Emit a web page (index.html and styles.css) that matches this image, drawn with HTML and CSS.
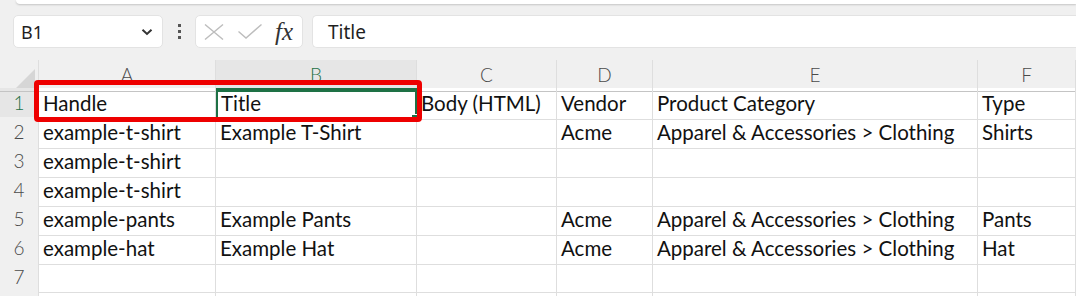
FILE: index.html
```html
<!DOCTYPE html>
<html lang="en">
<head>
  <meta charset="UTF-8">
  <title>Products - Sheet</title>
  <link rel="stylesheet" href="styles.css">
</head>
<body>
  <div class="ribbon-edge"></div>

  <div class="toolbar">
    <div class="name-box">
      <span>B1</span>
      <svg class="chevron" width="12" height="8" viewBox="0 0 12 8"><path d="M1.5 1.8 L6 6 L10.5 1.8" fill="none" stroke="#333" stroke-width="2"/></svg>
    </div>
    <div class="grip"><i></i><i></i><i></i></div>
    <div class="fx-box">
      <svg width="20" height="16" viewBox="0 0 20 16"><path d="M1 0.5 L19 15.5 M19 0.5 L1 15.5" stroke="#bdbdbd" stroke-width="1.4" fill="none"/></svg>
      <svg width="24" height="15" viewBox="0 0 24 15"><path d="M0.5 7.5 L8 14 L23.5 0.5" stroke="#bdbdbd" stroke-width="1.4" fill="none"/></svg>
      <span class="fx">fx</span>
    </div>
    <div class="formula">Title</div>
  </div>

  <div class="sheet">
    <div class="row head">
      <div class="corner"></div>
      <div class="col a">A</div>
      <div class="col b active">B</div>
      <div class="col c">C</div>
      <div class="col d">D</div>
      <div class="col e">E</div>
      <div class="col f">F</div>
    </div>
    <div class="row">
      <div class="num active">1</div>
      <div class="cell a">Handle</div>
      <div class="cell b selected">Title</div>
      <div class="cell c">Body (HTML)</div>
      <div class="cell d">Vendor</div>
      <div class="cell e">Product Category</div>
      <div class="cell f">Type</div>
    </div>
    <div class="row">
      <div class="num">2</div>
      <div class="cell a">example-t-shirt</div>
      <div class="cell b">Example T-Shirt</div>
      <div class="cell c"></div>
      <div class="cell d">Acme</div>
      <div class="cell e">Apparel &amp; Accessories &gt; Clothing</div>
      <div class="cell f">Shirts</div>
    </div>
    <div class="row">
      <div class="num">3</div>
      <div class="cell a">example-t-shirt</div>
      <div class="cell b"></div>
      <div class="cell c"></div>
      <div class="cell d"></div>
      <div class="cell e"></div>
      <div class="cell f"></div>
    </div>
    <div class="row">
      <div class="num">4</div>
      <div class="cell a">example-t-shirt</div>
      <div class="cell b"></div>
      <div class="cell c"></div>
      <div class="cell d"></div>
      <div class="cell e"></div>
      <div class="cell f"></div>
    </div>
    <div class="row">
      <div class="num">5</div>
      <div class="cell a">example-pants</div>
      <div class="cell b">Example Pants</div>
      <div class="cell c"></div>
      <div class="cell d">Acme</div>
      <div class="cell e">Apparel &amp; Accessories &gt; Clothing</div>
      <div class="cell f">Pants</div>
    </div>
    <div class="row">
      <div class="num">6</div>
      <div class="cell a">example-hat</div>
      <div class="cell b">Example Hat</div>
      <div class="cell c"></div>
      <div class="cell d">Acme</div>
      <div class="cell e">Apparel &amp; Accessories &gt; Clothing</div>
      <div class="cell f">Hat</div>
    </div>
    <div class="row">
      <div class="num">7</div>
      <div class="cell a"></div>
      <div class="cell b"></div>
      <div class="cell c"></div>
      <div class="cell d"></div>
      <div class="cell e"></div>
      <div class="cell f"></div>
    </div>
    <div class="row">
      <div class="num"></div>
      <div class="cell a"></div>
      <div class="cell b"></div>
      <div class="cell c"></div>
      <div class="cell d"></div>
      <div class="cell e"></div>
      <div class="cell f"></div>
    </div>

    <div class="highlight"></div>
  </div>
</body>
</html>
```

FILE: styles.css
```css
body {
  margin: 0;
  width: 1076px;
  height: 296px;
  overflow: hidden;
  background: #f0f0f0;
  font-family: 'Noto Sans', sans-serif;
  color: #1f1f1f;
}

.ribbon-edge {
  height: 4px;
  margin-left: 16px;
  background: #fff;
  border-bottom-left-radius: 8px;
  box-shadow: 0 1px 2px rgba(0,0,0,0.18);
}

.toolbar {
  display: flex;
  align-items: center;
  height: 33px;
  padding: 11px 0 12px 13px;
}

.name-box {
  width: 150px;
  height: 33px;
  box-sizing: border-box;
  display: flex;
  align-items: center;
  justify-content: space-between;
  padding: 0 9px 0 7px;
  background: #fff;
  border: 1px solid #e3e3e3;
  border-radius: 5px;
  font-size: 18px;
}

.grip {
  width: 32px;
  display: flex;
  flex-direction: column;
  align-items: center;
  gap: 3px;
}

.grip i {
  width: 3px;
  height: 3px;
  background: #555;
}

.fx-box {
  width: 108px;
  height: 33px;
  box-sizing: border-box;
  display: flex;
  align-items: center;
  gap: 14px;
  padding-left: 8px;
  background: #fff;
  border: 1px solid #e3e3e3;
  border-radius: 5px;
}

.fx {
  font-family: 'Liberation Serif', serif;
  font-style: italic;
  font-size: 25px;
  color: #333;
  margin-left: -1px;
  line-height: 1;
}

.formula {
  flex: 1;
  height: 33px;
  box-sizing: border-box;
  margin-left: 9px;
  padding-left: 15px;
  display: flex;
  align-items: center;
  background: #fff;
  border: 1px solid #e3e3e3;
  border-right: none;
  border-radius: 5px 0 0 5px;
  font-size: 19px;
}

.sheet {
  position: relative;
  background: #fff;
  font-family: 'Lato', sans-serif;
}

.row {
  display: grid;
  grid-template-columns: 39px 177px 201px 140px 96px 325px 98px;
  height: 29px;
}

.row > div {
  box-sizing: border-box;
  border-right: 1px solid #dedede;
  border-bottom: 1px solid #dedede;
}

.head {
  height: 28px;
  background: #f0f0f0;
}

.head > div {
  border-bottom-color: #c4c4c4;
}

.corner {
  position: relative;
}

.corner::after {
  content: "";
  position: absolute;
  right: 3px;
  bottom: 3px;
  border-style: solid;
  border-width: 0 0 19px 19px;
  border-color: transparent transparent #d6d6d6 transparent;
}

.col {
  text-align: center;
  font-size: 19px;
  line-height: 30px;
  color: #4a4a4a;
  font-weight: 300;
}

.col.active {
  color: #1e7145;
  background: #e6e6e6;
  border-bottom: 2px solid #1e7145;
}

.num {
  background: #f0f0f0;
  text-align: center;
  font-size: 19px;
  line-height: 30px;
  color: #4a4a4a;
  font-weight: 300;
}

.num.active {
  color: #1e7145;
  background: #e6e6e6;
}

.cell {
  padding-left: 4px;
  font-size: 20.5px;
  line-height: 31px;
  color: #111;
  white-space: nowrap;
}

.cell.selected {
  position: relative;
  border: 2px solid #1e7145;
  line-height: 27px;
  padding-left: 3px;
}

.cell.selected::after {
  content: "";
  position: absolute;
  right: -3px;
  bottom: -3px;
  width: 5px;
  height: 5px;
  background: #1e7145;
  border: 1px solid #fff;
}

.highlight {
  position: absolute;
  left: 34px;
  top: 20px;
  width: 388px;
  height: 42px;
  box-sizing: border-box;
  border: 5px solid #ee0000;
  border-radius: 4px;
}
```
